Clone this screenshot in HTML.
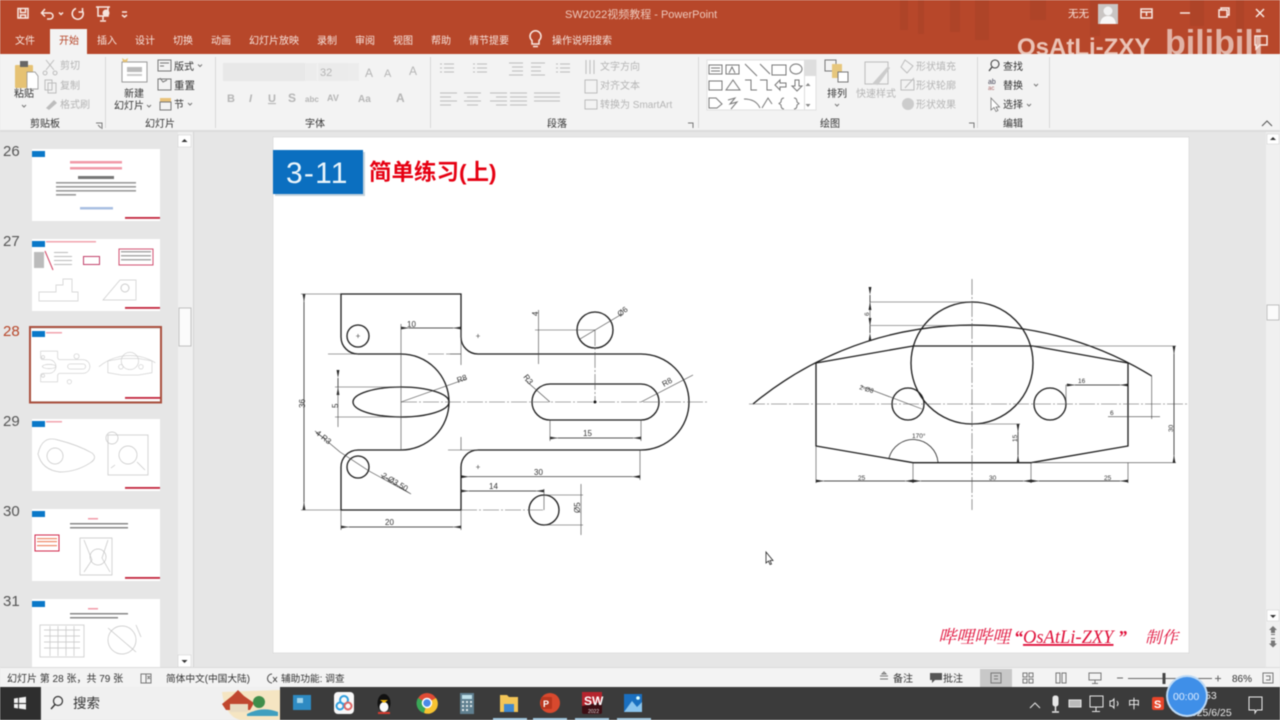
<!DOCTYPE html>
<html lang="zh"><head><meta charset="utf-8"><title>SW2022视频教程 - PowerPoint</title>
<style>
html,body{margin:0;padding:0;width:1280px;height:720px;overflow:hidden;background:#e6e6e6}
svg{position:absolute;left:0;top:0;display:block;filter:blur(.45px)}
text{font-family:"Liberation Sans","Noto Sans CJK SC",sans-serif;font-size:10px;fill:#333}
.w{fill:#f6e3dc}.g{fill:#b5b5b5}.d{fill:#3a3a3a}
.main{fill:none;stroke:#1c1c1c;stroke-width:1.3}
.thin{fill:none;stroke:#444;stroke-width:.6}
.dim{fill:none;stroke:#333;stroke-width:.7;marker-start:url(#a);marker-end:url(#a)}
.cl{fill:none;stroke:#555;stroke-width:.6;stroke-dasharray:16 2 2 2}
.dt{font-size:8px;fill:#333}
.ic{fill:none;stroke:#777;stroke-width:1}
.ig{fill:none;stroke:#bdbdbd;stroke-width:1}
.iw{fill:none;stroke:#f8e8e2;stroke-width:1.5}
.tn{fill:none;stroke:#ccc;stroke-width:4.500}
.tb{fill:#0a78c8}
.num{font-size:15px;fill:#555}
.sig{font-family:'Liberation Serif','Noto Serif CJK SC',serif;font-size:18px;font-style:italic;fill:#e0103a}
</style></head><body>
<svg width="1280" height="720" viewBox="0 0 1280 720" xmlns="http://www.w3.org/2000/svg">
<defs>
<marker id="a" viewBox="0 0 8 4" refX="0" refY="2" markerWidth="8" markerHeight="4" markerUnits="userSpaceOnUse" orient="auto-start-reverse"><path d="M0 2L8 .6V3.4Z" fill="#222"/></marker>
<g id="draw">
 <path d="M341 337V294H461V337A17 17 0 0 0 478 354H641A48 48 0 0 1 641 450H478A17 17 0 0 0 461 467V510H341V467A17 17 0 0 1 358 450H401A48 48 0 0 0 401 354H358A17 17 0 0 1 341 337Z"/>
 <ellipse cx="401" cy="402" rx="48" ry="15"/>
 <path d="M550 384H641A18 18 0 0 1 641 420H550A18 18 0 0 1 550 384Z"/>
 <circle cx="358" cy="336" r="11"/><circle cx="358" cy="467" r="11"/>
 <circle cx="595" cy="330" r="18"/><circle cx="544" cy="510" r="15"/>
 <path d="M753 404A343 343 0 0 1 1151.700 376"/>
 <path d="M816 363L913 346H1033L1128 363V446L1031 462.700H913L816 446Z"/>
 <circle cx="972" cy="363" r="61"/><circle cx="908" cy="404" r="16"/><circle cx="1050" cy="404" r="16"/>
</g>
</defs>

<!-- backgrounds -->
<rect width="1280" height="720" fill="#e6e6e6"/>
<rect width="1280" height="54" fill="#b7472a"/>
<g fill="#8f3a23" opacity=".22"><rect x="900" y="0" width="8" height="30"/><rect x="918" y="0" width="6" height="34"/><rect x="950" y="0" width="10" height="32"/><rect x="975" y="0" width="14" height="40"/><rect x="1030" y="0" width="16" height="20"/><rect x="1090" y="0" width="10" height="36"/><rect x="1190" y="0" width="14" height="26"/><rect x="1236" y="0" width="8" height="30"/></g>
<rect y="54" width="1280" height="77" fill="#f3f3f3"/>
<rect y="130" width="1280" height="2" fill="#dcdcdc"/>

<!-- title bar -->
<path class="iw" d="M18 8.500H28V18H18ZM20.500 9V12.500H25.500V9M20.500 18V15H25.500V18"/>
<path class="iw" d="M42 13H50A3 3 0 0 1 50 19H47M45 9L41.500 13L45 16.500" stroke-width="1.800"/>
<path class="iw" d="M59 12.500l2 2 2-2" stroke-width=".7"/>
<path class="iw" d="M76 8.500A5.500 5.500 0 1 0 82.500 11M82.500 8V12H78.500" stroke-width="1.800"/>
<path class="iw" d="M96 7H110M98 7V16H108V7M103 16V20M100 21H106" stroke-width="1"/><circle cx="106" cy="13" r="3.500" fill="#f6e3dc"/>
<path class="iw" d="M122 12H127M122 15l2.500 2 2.500-2" stroke-width=".8"/>
<text x="565" y="18" style="font-size:11px;fill:#eec9bc">SW2022视频教程  -  PowerPoint</text>
<text x="1068" y="17" class="w" style="font-size:10.500px">无无</text>
<rect x="1098" y="4" width="20" height="20" fill="#c9c5c3"/><circle cx="1108" cy="11" r="4.500" fill="#f2f2f2"/><path d="M1100 24Q1101 16 1108 16T1116 24Z" fill="#f7f7f7"/>
<path class="iw" d="M1141 9H1152V18H1141ZM1141 12H1152M1146.500 12V16" stroke-width="1"/>
<path class="iw" d="M1180 13H1190" stroke-width="1"/>
<path class="iw" d="M1219 10H1227V17H1219ZM1221 10V8H1229V15H1227" stroke-width="1"/>
<path class="iw" d="M1256 9L1264 17M1264 9L1256 17" stroke-width="1"/>

<!-- tabs -->
<g class="w"><text x="15" y="44" class="w">文件</text><text x="97" y="44" class="w">插入</text><text x="135" y="44" class="w">设计</text><text x="173" y="44" class="w">切换</text><text x="211" y="44" class="w">动画</text><text x="249" y="44" class="w">幻灯片放映</text><text x="317" y="44" class="w">录制</text><text x="355" y="44" class="w">审阅</text><text x="393" y="44" class="w">视图</text><text x="431" y="44" class="w">帮助</text><text x="469" y="44" class="w">情节提要</text><text x="552" y="44" class="w">操作说明搜索</text></g>
<rect x="50" y="29" width="37" height="25" fill="#f3f3f3"/><text x="59" y="44" style="fill:#b7472a">开始</text>
<path class="iw" d="M532 44V40.500A5.500 5.500 0 1 1 539 40.500V44ZM533 46.500H538" stroke-width="1"/>

<!-- watermark -->
<text x="1017" y="55" style="font-size:24px;font-weight:bold;fill:#f4d9cf" opacity=".85">OsAtLi-ZXY</text>
<text x="1165" y="54" style="font-size:34px;font-weight:bold;fill:#f0d8d0" opacity=".75">bilibili</text>
<path class="iw" d="M1255 36H1267V45H1260L1256 49V45H1255Z" stroke-width="1"/>
<rect y="54" x="1010" width="270" height="10" fill="#f3f3f3"/>

<!-- ribbon separators -->
<g stroke="#d8d8d8"><path d="M105.500 57V128M215.500 57V128M430.500 57V128M698.500 57V128M977.500 57V128M1049.500 57V128"/></g>

<!-- clipboard group -->
<rect x="15" y="65" width="18" height="23" rx="1" fill="#e6c273"/><rect x="20" y="61" width="8" height="6" fill="#666"/><path d="M27 72H35L38 76V89H27Z" fill="#fff" stroke="#888" stroke-width=".7"/>
<text x="14" y="97">粘贴</text><path class="ic" d="M22 105l2 2 2-2" stroke-width=".7"/>
<path class="ig" d="M46 60L54 70M54 60L46 70M45 71a2 2 0 1 0 .1 0M55 71a2 2 0 1 0 .1 0"/>
<text x="60" y="69" class="g">剪切</text>
<path class="ig" d="M45 80H52V90H45ZM48 83H56V93H48Z"/><text x="60" y="89" class="g">复制</text>
<path d="M46 108L54 100l3 3-8 7Z" fill="#bdbdbd"/><text x="60" y="108" class="g">格式刷</text>
<text x="30" y="127">剪贴板</text><path class="ic" d="M96 123H102V129M98 125l3 3" stroke-width=".7"/>

<!-- slides group -->
<path d="M122 62H147V82H122Z" fill="#fff" stroke="#999"/><rect x="127" y="67" width="15" height="5" fill="#bbb"/><rect x="127" y="74" width="15" height="2" fill="#ccc"/><path d="M122 58l3 2 3-2-1 4h-4z" fill="#e6c273"/>
<text x="124" y="97">新建</text><text x="114" y="109">幻灯片</text><path class="ic" d="M147 105l2 2 2-2" stroke-width=".7"/>
<path class="ic" d="M158 60H171V71H158ZM160 63H169M160 66H164"/><text x="174" y="70">版式</text><path class="ic" d="M198 64.500l2 2 2-2" stroke-width=".7"/>
<path class="ic" d="M158 79H171V90H158ZM160 78l3 4 4-2"/><text x="174" y="89" style="font-size:10.500px">重置</text>
<path d="M160 98H171V102H160Z" fill="#e9c27a"/><path class="ic" d="M160 102H171V110H160Z"/><text x="174" y="108">节</text><path class="ic" d="M188 103l2 2 2-2" stroke-width=".7"/>
<text x="145" y="127">幻灯片</text>

<!-- font group -->
<rect x="223" y="63" width="82" height="18" fill="#e8e8e8"/><rect x="305" y="63" width="12" height="18" fill="#ececec"/>
<rect x="318" y="63" width="30" height="18" fill="#ebebeb"/><rect x="348" y="63" width="11" height="18" fill="#ececec"/>
<text x="320" y="76" class="g" style="font-size:11px">32</text>
<text x="365" y="77" class="g" style="font-size:12px">A</text><text x="384" y="77" class="g" style="font-size:11px">A</text><text x="409" y="75" class="g" style="font-size:12px">A</text>
<text x="227" y="102" class="g" style="font-size:11px;font-weight:bold">B</text><text x="249" y="102" class="g" style="font-size:11px;font-style:italic;font-weight:bold">I</text><text x="268" y="102" class="g" style="font-size:11px;font-weight:bold;text-decoration:underline">U</text><text x="288" y="102" class="g" style="font-size:12px;font-weight:bold">S</text><text x="305" y="102" class="g" style="font-size:8px;font-weight:bold">abc</text><text x="327" y="101" class="g" style="font-size:9px;font-weight:bold">AV</text><text x="358" y="102" class="g" style="font-size:10px;font-weight:bold">Aa</text><text x="396" y="102" class="g" style="font-size:12px;font-weight:bold">A</text>
<text x="305" y="127">字体</text>

<!-- paragraph group -->
<path class="ig" d="M440 64h2M444 64h10M440 68h2M444 68h10M440 72h2M444 72h10M473 64h2M477 64h10M473 68h2M477 68h10M473 72h2M477 72h10M509 63h14M512 67h11M512 71h11M509 75h14M531 63h14M531 67h10M531 71h10M531 75h14M556 64h2M560 64h10M556 68h2M560 68h10M556 72h2M560 72h10"/>
<path class="ig" d="M440 93h17M440 97h11M440 101h17M440 105h11M464 93h17M467 97h11M464 101h17M467 105h11M490 93h17M496 97h11M490 101h17M496 105h11M510 93h17M510 97h17M510 101h17M510 105h17M534 93h26M534 97h26M534 101h26"/>
<path class="ig" d="M586 60V74M590 60V74M594 60V74M585 80H597V93H585ZM585 100H597V109H585Z"/>
<text x="600" y="70" class="g">文字方向</text><text x="600" y="89" class="g">对齐文本</text><text x="600" y="108" class="g">转换为 SmartArt</text>
<text x="547" y="127">段落</text>
<path class="ic" d="M688 123h5v5" stroke-width=".6"/>

<!-- shapes gallery -->
<rect x="707" y="60" width="109" height="50" fill="#fff" stroke="#e0e0e0"/><rect x="804" y="60" width="12" height="16" fill="#dedede"/><path d="M804.500 60V110" stroke="#ddd"/>
<g stroke-width=".8"><path class="ic" d="M709 65H722V74H709ZM711 68H720M711 71H720M726 65H739V74H726ZM729 73l3-6 3 6M745 64L757 76M760 64L770 74M772 65H786V75H772Z" stroke="#555"/><ellipse class="ic" cx="796" cy="69" rx="6" ry="5" stroke="#555"/>
<path class="ic" d="M709 81H722V90H709ZM726 90l7-10 7 10ZM745 80H751V90H757M760 80H767V90H772M775 85l5-5v3h6v4h-6v3ZM795 80h4v6h3l-5 5-5-5h3Z" stroke="#555"/>
<path class="ic" d="M709 108V98H716L722 104L717 108ZM728 100L735 98 730 104 737 102 731 109M744 99Q756 99 760 108M762 108L768 98 772 104M784 98Q781 98 781 102L779 103.500 781 105Q781 109 784 109M794 98Q797 98 797 102L799 103.500 797 105Q797 109 794 109" stroke="#555"/></g>
<path d="M808 83l2.500 3h-5ZM806 100h4M808 107l2.500-3h-5Z" fill="#888"/>
<path class="ic" d="M825 60H836V71H825Z"/><rect x="832" y="64" width="10" height="14" fill="#e7c77d"/><rect x="838" y="72" width="10" height="10" fill="#fff" stroke="#777"/>
<text x="827" y="97">排列</text><path class="ic" d="M835 104l2 2 2-2" stroke-width=".7"/>
<path class="ig" d="M865 62H888V84H865Z" fill="#f8f8f8"/><path d="M872 84L888 66l2 2L878 85Z" fill="#ccc"/>
<text x="856" y="97" class="g">快速样式</text>
<path class="ig" d="M905 60l8 6-6 7-6-6Z"/><text x="916" y="70" class="g">形状填充</text>
<path class="ig" d="M901 80H914V90H901ZM905 88L914 78"/><text x="916" y="89" class="g">形状轮廓</text>
<circle cx="908" cy="104" r="6" fill="#ccc"/><text x="916" y="108" class="g">形状效果</text>
<text x="820" y="127">绘图</text>
<path class="ic" d="M969 123h5v5" stroke-width=".6"/>

<!-- editing -->
<circle cx="995" cy="64" r="4" fill="none" stroke="#444" stroke-width="1.100"/><path d="M992 67L989 71" stroke="#444" stroke-width="1.300"/><text x="1003" y="70">查找</text>
<text x="988" y="84" style="font-size:7px;fill:#445">ab</text><text x="988" y="90" style="font-size:6px;fill:#a66">ac</text><text x="1003" y="89">替换</text><path class="ic" d="M1034 84l2 2 2-2" stroke-width=".7"/>
<path d="M991 98V110L994 107.500 996 111.500 998 110.500 996 107H999.500Z" fill="#fff" stroke="#777" stroke-width=".8"/><text x="1003" y="108">选择</text><path class="ic" d="M1027 104l2 2 2-2" stroke-width=".7"/>
<text x="1003" y="127">编辑</text>
<path d="M1262 126l5-5 5 5" fill="none" stroke="#555"/>

<!-- thumbnails -->
<rect x="178" y="132" width="15" height="536" fill="#f0f0f0"/><rect x="193" y="132" width="1" height="536" fill="#d4d4d4"/>
<rect x="178" y="135" width="13" height="12" fill="#fff" stroke="#ccc" stroke-width=".5"/><path d="M184.500 139l3 3h-6Z" fill="#333"/>
<rect x="179" y="308" width="12" height="38" fill="#fbfbfb" stroke="#aaa" stroke-width=".7"/>
<rect x="178" y="655" width="13" height="12" fill="#fff" stroke="#ccc" stroke-width=".5"/><path d="M184.500 663l3-3h-6Z" fill="#333"/>

<text x="3" y="156" class="num">26</text><text x="3" y="246" class="num">27</text><text x="3" y="336" class="num" style="fill:#b7472a">28</text><text x="3" y="426" class="num">29</text><text x="3" y="516" class="num">30</text><text x="3" y="606" class="num">31</text>

<g fill="#fff"><rect x="32" y="149" width="128" height="72"/><rect x="32" y="239" width="128" height="72"/><rect x="31" y="329" width="129" height="72"/><rect x="32" y="419" width="128" height="72"/><rect x="32" y="509" width="128" height="72"/><rect x="32" y="599" width="128" height="69"/></g>
<rect x="30" y="327" width="131" height="75.500" fill="none" stroke="#a94f3d" stroke-width="2"/>
<g class="tb"><rect x="32" y="151" width="13" height="6"/><rect x="32" y="241" width="13" height="6"/><rect x="32" y="331" width="13" height="6"/><rect x="32" y="421" width="13" height="6"/><rect x="32" y="511" width="13" height="6"/><rect x="32" y="601" width="13" height="6"/></g>
<g fill="#c2263d"><rect x="125" y="217" width="35" height="1.800"/><rect x="125" y="307" width="35" height="1.800"/><rect x="125" y="397" width="35" height="1.800"/><rect x="125" y="487" width="35" height="1.800"/><rect x="125" y="577" width="35" height="1.800"/></g>
<!-- 26 -->
<g fill="#f29aa8"><rect x="70" y="161" width="52" height="2.500"/><rect x="70" y="167" width="52" height="2.500"/></g>
<rect x="78" y="176" width="36" height="3" fill="#777"/>
<g fill="#999"><rect x="56" y="182" width="80" height="1.600"/><rect x="56" y="186" width="80" height="1.600"/><rect x="56" y="190" width="80" height="1.600"/><rect x="56" y="194" width="20" height="1.600"/></g>
<rect x="80" y="207" width="33" height="2.500" fill="#a9bfe2"/>
<!-- 27 -->
<rect x="46" y="241" width="50" height="1.500" fill="#f2a3ae"/><g fill="#bbb"><rect x="34" y="252" width="10" height="16"/><rect x="54" y="252" width="14" height="1"/><rect x="54" y="256" width="18" height="1"/><rect x="54" y="260" width="18" height="1"/><rect x="54" y="264" width="18" height="1"/></g><path d="M45 251L53 270" stroke="#d04060"/>
<rect x="83.500" y="256.500" width="16" height="8" fill="#fff" stroke="#c2406a"/><rect x="119" y="249" width="34" height="16" fill="#fff" stroke="#d05070"/><g fill="#aaa"><rect x="121" y="251" width="30" height="1.500"/><rect x="121" y="255" width="30" height="1.500"/><rect x="121" y="259" width="30" height="1.500"/></g>
<path d="M39 292H56V285H63V279H72V292H78V301H39Z" fill="none" stroke="#ccc" stroke-width=".7"/><path d="M103 300L120 280 136 280V300Z" fill="none" stroke="#ccc" stroke-width=".7"/><circle cx="125" cy="288" r="4" fill="none" stroke="#ccc"/>
<!-- 28 -->
<rect x="46" y="332" width="16" height="1.500" fill="#f2a3ae"/>
<use href="#draw" class="tn" transform="translate(31 329) scale(.1415) translate(-273 -137)"/>
<!-- 29 -->
<rect x="46" y="421" width="16" height="1.500" fill="#f2a3ae"/>
<g fill="none" stroke="#c4c4c4" stroke-width=".7"><path d="M38 454Q42 435 58 440Q78 445 92 453Q98 458 90 463Q76 472 60 472Q42 470 38 454Z"/><circle cx="55" cy="456" r="8"/><rect x="108" y="435" width="40" height="40"/><circle cx="112" cy="438" r="6"/><circle cx="128" cy="455" r="9"/><path d="M137 462l8 8M115 465l-4 3"/></g>
<!-- 30 -->
<rect x="88" y="518" width="10" height="1.500" fill="#f29aa8"/><g fill="#888"><rect x="70" y="523" width="58" height="1.500"/><rect x="70" y="527" width="58" height="1.500"/></g>
<rect x="35" y="535" width="24" height="16" fill="#fff" stroke="#d0284a"/><g fill="#e86"><rect x="37" y="538" width="20" height="1.200"/><rect x="37" y="541" width="20" height="1.200"/><rect x="37" y="545" width="20" height="1.200"/></g>
<g fill="none" stroke="#c4c4c4" stroke-width=".7"><path d="M80 538H112V575H80Z"/><circle cx="98" cy="557" r="8"/><path d="M84 540L92 560L84 572M108 540L102 558L110 572"/></g>
<!-- 31 -->
<rect x="88" y="608" width="10" height="1.500" fill="#f29aa8"/><g fill="#888"><rect x="70" y="613" width="58" height="1.500"/><rect x="70" y="617" width="48" height="1.500"/></g>
<g fill="none" stroke="#c4c4c4" stroke-width=".7"><rect x="40" y="625" width="44" height="32"/><path d="M44 630h36M44 636h36M44 642h36M44 648h36M50 626v30M58 626v30M66 626v30M74 626v30"/><circle cx="122" cy="640" r="14"/><path d="M108 628l28 24M136 625l5 12"/></g>

<!-- main slide -->
<rect x="273" y="137" width="916" height="516" fill="#fff" stroke="#d8d8d8" stroke-width=".7"/>
<rect x="275" y="152" width="90" height="44" fill="#9cb4c6" opacity=".6"/>
<rect x="273" y="150" width="90" height="44" fill="#0b6fc0"/>
<text x="286" y="183" style="font-size:30px;fill:#eaf5fb;letter-spacing:1.200px">3-11</text>
<text x="369" y="180" style="font-size:22.500px;font-weight:bold;fill:#e60012">简单练习(上)</text>
<text x="938" y="643" class="sig">哔哩哔哩</text>
<text x="1014" y="643" class="sig" style="font-weight:bold">“</text>
<text x="1023" y="643" class="sig" text-decoration="underline" style="font-size:18.500px">OsAtLi-ZXY</text>
<text x="1118" y="643" class="sig" style="font-weight:bold">”</text>
<text x="1145" y="643" class="sig" style="font-size:16.500px">制作</text>

<use href="#draw" class="main"/>

<!-- left dims -->
<path class="thin" d="M301 294H341M301 510H341M328 354H358M448 354H461M448 450H478M461 330V365M461 437V450M401 324V354M401 354V450M335 387H401M335 417H401M341 510V530M461 510V530M461 476.700H640M640 450V480M544 489V510M544 495H583M544 525H583M535 330H595M550 420V441M641 420V441"/>
<path class="dim" d="M304 302V502"/>
<path class="thin" d="M304 294V510"/>
<path class="dim" d="M409 328H453"/><path class="thin" d="M401 328H461"/>
<path class="dim" d="M338 378V387"/><path class="thin" d="M338 378V427"/>
<path class="dim" d="M349 527H453"/><path class="thin" d="M341 527H461"/>
<path class="dim" d="M469 491H536"/><path class="thin" d="M461 491H544"/>
<path class="dim" d="M469 476.700H632"/>
<path class="dim" d="M558 438H633"/><path class="thin" d="M550 438H641"/>
<path class="thin" d="M538.500 310V364M581 484V535M401 402L466 379M550 402L525 380M641 402L693 375M580 339L622 314M340 452L369 471L411 494M315 431L340 452M381 475L411 494"/>
<path class="cl" d="M401 402H707M595 330V402M461 510H544M428 354H461"/>
<path d="M595 400.500a1.500 1.500 0 1 1-.1 0" fill="#111"/>
<path class="thin" d="M476 336h4M478 334v4M476 467h4M478 465v4M356 336h4M358 334v4"/>
<text class="dt" transform="translate(305 408) rotate(-90)">36</text>
<text class="dt" x="407" y="327">10</text>
<text class="dt" transform="translate(338 408) rotate(-90)">5</text>
<text class="dt" transform="translate(458 383) rotate(-20)">R8</text>
<text class="dt" transform="translate(315 434) rotate(38)">4-R3</text>
<text class="dt" transform="translate(381 477) rotate(30)">2-Ø3.50</text>
<text class="dt" x="385" y="525">20</text>
<text class="dt" x="489" y="489">14</text>
<text class="dt" x="534" y="475">30</text>
<text class="dt" x="583" y="436">15</text>
<text class="dt" transform="translate(538 316) rotate(-90)">4</text>
<text class="dt" transform="translate(620 317) rotate(-38)">Ø6</text>
<text class="dt" transform="translate(523 377) rotate(52)">R3</text>
<text class="dt" transform="translate(664 387) rotate(-30)">R8</text>
<text class="dt" transform="translate(580 513) rotate(-90)">Ø5</text>

<!-- right dims -->
<path class="cl" d="M972 279V510M749 404H1187"/>
<path class="thin" d="M870 302H972M870 325.500H972M870 295V333M1033 346H1176M1031 462.700H1176M1174 346V463M1066 404V385H1128M1108 416.700H1160M1151.700 376V419M1128 463V483M816 446V483M913 463V483M1031 463V483M972 424H1020M1018 424V463M816 481H1128M861 386L922 409"/>
<path class="dim" d="M870 295V302"/><path class="dim" d="M870 333V326"/>
<path class="dim" d="M1174 354V455"/><path class="dim" d="M1120 385H1075"/><path class="dim" d="M824 481H905"/><path class="dim" d="M921 481H1023"/><path class="dim" d="M1039 481H1120"/><path class="dim" d="M1018 455V432"/>
<path d="M889 458A25 25 0 0 1 938 462" fill="none" stroke="#222" stroke-width=".8"/>
<text class="dt" style="font-size:6.500px" transform="translate(869 316) rotate(-90)">6</text>
<text class="dt" style="font-size:6.500px" transform="translate(859 389) rotate(17)">2-Ø8</text>
<text class="dt" style="font-size:6.500px" x="1078" y="383">16</text>
<text class="dt" style="font-size:6.500px" x="1110" y="415">6</text>
<text class="dt" style="font-size:6.500px" transform="translate(1173 432) rotate(-90)">30</text>
<text class="dt" style="font-size:6.500px" transform="translate(1017 442) rotate(-90)">15</text>
<text class="dt" style="font-size:6.500px" x="858" y="480">25</text>
<text class="dt" style="font-size:6.500px" x="989" y="480">30</text>
<text class="dt" style="font-size:6.500px" x="1104" y="480">25</text>
<text class="dt" style="font-size:6.500px" x="912" y="438">170°</text>

<!-- cursor -->
<path d="M766 552V563L768.500 561 770 564.500 771.500 564 770 560.500H773Z" fill="#fff" stroke="#222" stroke-width=".8"/>

<!-- right scrollbar -->
<rect x="1266" y="132" width="14" height="536" fill="#f0f0f0"/>
<rect x="1267" y="134" width="12" height="10" fill="#fff" stroke="#ccc" stroke-width=".5"/><path d="M1273 137l3 3h-6Z" fill="#333"/>
<rect x="1267" y="305" width="12" height="15" fill="#fbfbfb" stroke="#aaa" stroke-width=".7"/>
<rect x="1267" y="610" width="12" height="11" fill="#fff" stroke="#ccc" stroke-width=".5"/><path d="M1273 618l3-3h-6Z" fill="#333"/>
<path d="M1273 626l4 4h-2v3h-4v-3h-2ZM1271 634h4v1h-4ZM1271 638h4v1h-4ZM1271 640.500h4v3h2l-4 4-4-4h2Z" fill="#777"/>
<rect x="0" y="667" width="1280" height="1" fill="#dcdcdc"/>

<!-- status bar -->
<rect y="668" width="1280" height="19" fill="#f3f3f3"/>
<text x="7" y="682" style="font-size:10px">幻灯片 第 28 张，共 79 张</text>
<path class="ic" d="M141 674H146V683H141ZM146 674H151V683H146M147.500 676l2.500 3M150 676l-2.500 3" stroke-width=".7"/>
<text x="166" y="682" style="font-size:9.700px">简体中文(中国大陆)</text>
<path d="M272 674A4.500 4.500 0 1 0 272 683M273 677l4 5M277 677l-4 5" fill="none" stroke="#444"/>
<text x="281" y="682" style="font-size:9.700px">辅助功能: 调查</text>
<path class="ic" d="M880 676H888M880 679H888M884 672l2 2h-4Z" stroke-width=".8"/><text x="893" y="682">备注</text>
<path d="M930 673H942V680H935L932 683V680H930Z" fill="#555"/><text x="943" y="682">批注</text>
<rect x="980" y="669" width="32" height="18" fill="#c8c8c8"/><path class="ic" d="M991 673H1001V683H991ZM994 676H998M994 679H998" stroke-width=".8"/>
<path class="ic" d="M1023 673H1027V677H1023ZM1029 673H1033V677H1029ZM1023 679H1027V683H1023ZM1029 679H1033V683H1029ZM1056 673H1060V683H1056ZM1062 673H1066V683H1062ZM1089 673H1101V680H1089ZM1095 680V683M1092 683.500H1098" stroke-width=".8"/>
<path d="M1117 678H1123M1128 678.500H1212M1215 678.500H1221M1218 675.500V681.500" stroke="#666" stroke-width="1"/><rect x="1162.500" y="673" width="3" height="11" fill="#444"/>
<text x="1232" y="682" style="font-size:10px">86%</text>
<path class="ic" d="M1263 673H1273V683H1263ZM1266 676h4v4h-4" stroke-width=".8"/>

<!-- taskbar -->
<rect y="687" width="1280" height="33" fill="#3b3b3b"/>
<rect width="40" y="687" height="33" fill="#2e2e2e"/>
<path d="M14 698.500l4-.6V703H14ZM19 697.700l7-1V703H19ZM14 704H18V708.500l-4-.6ZM19 704H26V709.500l-7-1Z" fill="#f2f2f2"/>
<rect x="41" y="687" width="239" height="33" fill="#f0f0f0"/>
<circle cx="58" cy="701" r="4.500" fill="none" stroke="#333" stroke-width="1.200"/><path d="M55 704.500L51 709" stroke="#333" stroke-width="1.400"/>
<text x="73" y="708" style="font-size:13.500px">搜索</text>
<path d="M222 692L280 690V720H240Q225 716 222 692Z" fill="#f6dfae" opacity=".7"/>
<path d="M222 704L232 696 238 690 244 696 254 703 250 710H226Z" fill="#c0472f"/><rect x="230" y="704" width="18" height="8" fill="#e9dcc2"/><circle cx="259" cy="702" r="6" fill="#3f8e4a"/><path d="M247 714Q262 706 278 712V716H247Z" fill="#3f9fbf"/>
<rect x="293" y="695" width="18" height="15" fill="#2e8ac2"/><rect x="297" y="698" width="6" height="5" fill="#9fd3ea"/>
<rect x="334" y="692" width="20" height="22" rx="4" fill="#f8f8f8"/><circle cx="344" cy="700" r="4" fill="none" stroke="#2f9fe0" stroke-width="2"/><circle cx="340" cy="706" r="3.500" fill="none" stroke="#30a0e0" stroke-width="2"/><circle cx="348" cy="706" r="3.500" fill="none" stroke="#d66" stroke-width="2"/>
<ellipse cx="384" cy="703" rx="6.500" ry="9" fill="#111"/><ellipse cx="384" cy="707" rx="4.500" ry="5" fill="#fafafa"/><path d="M380 700H388L384 703Z" fill="#f4b400"/><path d="M378 712h12v2h-12Z" fill="#d83a2e"/>
<circle cx="427" cy="703" r="10" fill="#e04b35"/><path d="M427 703L418 698A10 10 0 0 0 424 713Z" fill="#3aa757"/><path d="M427 703L436 698A10 10 0 0 1 424 713Z" fill="#f7c331"/><circle cx="427" cy="703" r="4.500" fill="#4a8ae8" stroke="#fff" stroke-width="1.500"/>
<rect x="460" y="693" width="14" height="21" fill="#5f7f8f"/><rect x="462" y="695" width="10" height="4" fill="#bfe0ea"/><g fill="#e0e8ea"><rect x="462" y="701" width="2" height="2"/><rect x="466" y="701" width="2" height="2"/><rect x="470" y="701" width="2" height="2"/><rect x="462" y="705" width="2" height="2"/><rect x="466" y="705" width="2" height="2"/><rect x="470" y="705" width="2" height="2"/><rect x="462" y="709" width="2" height="2"/><rect x="466" y="709" width="2" height="2"/></g>
<path d="M500 695H507L509 697H518V712H500Z" fill="#f3c557"/><rect x="504" y="704" width="10" height="8" fill="#3e88d0"/>
<circle cx="550" cy="703" r="10" fill="#d8492e"/><rect x="541" y="697" width="11" height="12" rx="1" fill="#b8371f"/><text x="543" y="707" style="font-size:9px;fill:#fff;font-weight:bold">P</text>
<rect x="582" y="692" width="20" height="22" rx="2" fill="#3d0f14"/><path d="M582 692H602V702L582 706Z" fill="#b5242e"/><text x="584" y="705" style="font-size:12px;font-weight:bold;fill:#fff">SW</text><text x="588" y="713" style="font-size:5px;fill:#ddd">2022</text>
<rect x="624" y="694" width="18" height="18" fill="#1a6fc0"/><path d="M624 712L632 701 637 707 642 702V712Z" fill="#8ac4ee"/><circle cx="638" cy="698" r="1.800" fill="#dff"/>
<g fill="#9ec6de"><rect x="493" y="718" width="34" height="2"/><rect x="533" y="718" width="34" height="2"/><rect x="575" y="718" width="34" height="2"/><rect x="617" y="718" width="34" height="2"/></g>
<!-- tray -->
<g fill="none" stroke="#e8e8e8" stroke-width="1"><path d="M1030 708l5-5 5 5"/><rect x="1053" y="696" width="5" height="10" rx="2" fill="#e8e8e8"/><path d="M1055.500 706V711M1052 712H1059" stroke-width="1.500"/><rect x="1069" y="700" width="12" height="7" fill="#bbb"/><path d="M1090 696H1103V707H1090ZM1096 707V711M1092 711.500H1100"/><path d="M1110 701h2l2-2v9l-2-2h-2ZM1117 701q2 3 0 5"/></g>
<text x="1128" y="708" style="font-size:12px;fill:#f0f0f0">中</text>
<rect x="1152" y="697" width="12" height="13" rx="2" fill="#e8452a"/><text x="1154" y="708" style="font-size:11px;font-weight:bold;fill:#fff">S</text>
<text x="1205" y="699" style="font-size:10.500px;fill:#e8e8e8">53</text>
<text x="1185" y="716" style="font-size:10.500px;fill:#e8e8e8">2025/6/25</text>
<path d="M1249 697H1262V710H1257L1255 713V710H1249Z" fill="none" stroke="#eee"/>
<circle cx="1187" cy="696" r="21" fill="#bcd9f5"/><circle cx="1187" cy="696" r="19" fill="#3f8fe8"/>
<text x="1173" y="700" style="font-size:10.500px;fill:#dcecff">00:00</text>
</svg>
</body></html>
